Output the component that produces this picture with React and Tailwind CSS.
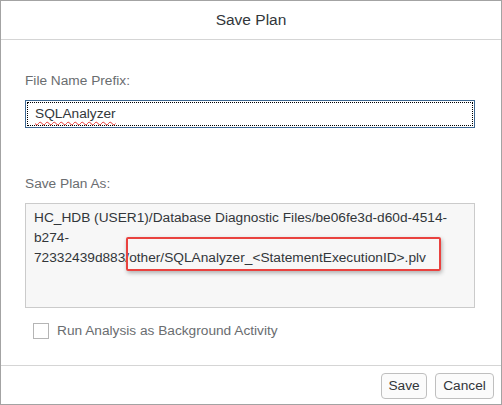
export default function App() {
    return (
        <div
            className="w-[502px] h-[405px] bg-white border border-[#a3a3a3] flex flex-col text-[13.7px] leading-[20px] text-[#32363a]"
            style={{ fontFamily: '"Liberation Sans", Arial, sans-serif' }}
        >
            <div className="h-[39px] shrink-0 border-b border-[#d5d5d5] flex items-center justify-center text-[15.5px] text-[#32363a]">
                Save Plan
            </div>

            <div className="flex-1 pl-[24px] pt-[31px]">
                <div className="text-[#6a6d70]">File Name Prefix:</div>
                <div className="mt-[9px] w-[450px] h-[28px] border border-[#3c6690] p-[1px]">
                    <div className="h-full border border-dotted border-black flex items-center pl-[7px]">
                        <span className="underline decoration-wavy decoration-[#e53935] decoration-1 underline-offset-[3px]">
                            SQLAnalyzer
                        </span>
                    </div>
                </div>

                <div className="mt-[46px] text-[#6a6d70]">Save Plan As:</div>
                <div className="relative mt-[9px] w-[450px] h-[105px] border border-[#cbcbcb] bg-[#f7f7f7] pl-[8px] pt-[4px]">
                    <div>
                        HC_HDB (USER1)/Database Diagnostic Files/be06fe3d-d60d-4514-
                        <br />
                        b274-
                        <br />
                        72332439d883/other/SQLAnalyzer_&lt;StatementExecutionID&gt;.plv
                    </div>
                    <div className="absolute left-[100px] top-[33px] w-[315px] h-[34px] border-[2.5px] border-[#e9423f] rounded-[2px] shadow-[1px_2px_4px_rgba(0,0,0,0.3)]" />
                </div>

                <label className="mt-[13px] ml-[8px] flex items-center gap-[8px] text-[#6a6d70]">
                    <span className="w-[16px] h-[16px] border border-[#b5b5b5] bg-white shrink-0" />
                    Run Analysis as Background Activity
                </label>
            </div>

            <div className="h-[39px] shrink-0 border-t border-[#d5d5d5] flex justify-end items-start gap-[8px] pt-[7px] pr-[7px]">
                <button className="h-[26px] w-[46px] border border-[#bfbfbf] rounded-[4px] bg-[#fbfbfb] text-[#32363a]">
                    Save
                </button>
                <button className="h-[26px] w-[59px] border border-[#bfbfbf] rounded-[4px] bg-[#fbfbfb] text-[#32363a]">
                    Cancel
                </button>
            </div>
        </div>
    );
}
